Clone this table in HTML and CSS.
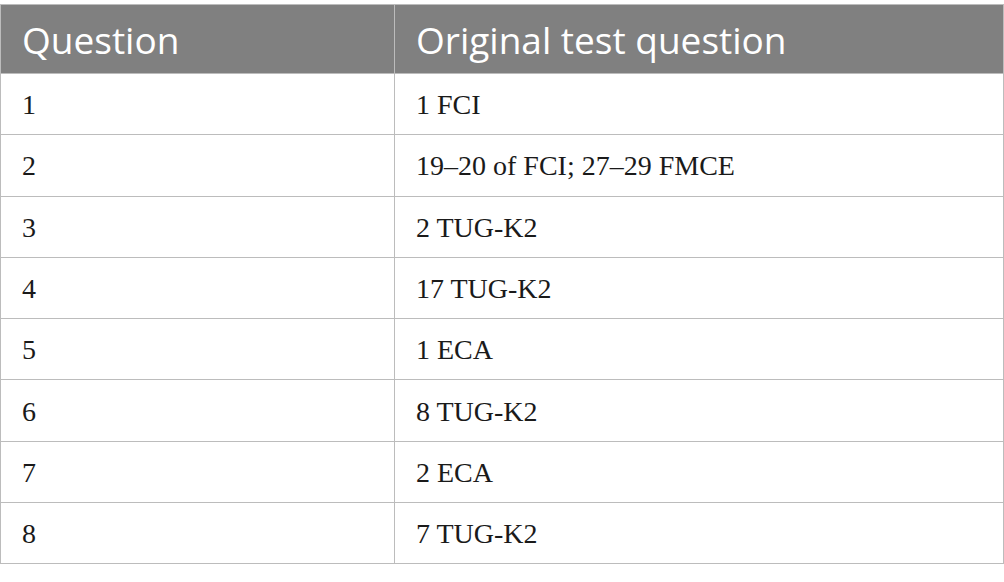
FILE: index.html
```html
<!DOCTYPE html>
<html>
<head>
<meta charset="utf-8">
<link rel="stylesheet" href="styles.css">
</head>
<body>
<table class="qtable">
  <thead>
    <tr class="head-row">
      <th class="col-q">Question</th>
      <th class="col-o">Original test question</th>
    </tr>
  </thead>
  <tbody>
    <tr><td>1</td><td>1 FCI</td></tr>
    <tr><td>2</td><td>19–20 of FCI; 27–29 FMCE</td></tr>
    <tr><td>3</td><td>2 TUG-K2</td></tr>
    <tr><td>4</td><td>17 TUG-K2</td></tr>
    <tr><td>5</td><td>1 ECA</td></tr>
    <tr><td>6</td><td>8 TUG-K2</td></tr>
    <tr><td>7</td><td>2 ECA</td></tr>
    <tr><td>8</td><td>7 TUG-K2</td></tr>
  </tbody>
</table>
</body>
</html>
```
FILE: styles.css
```css
html, body {
  margin: 0;
  padding: 0;
  background: #ffffff;
}
body {
  padding-top: 4px;
}
.qtable {
  width: 1004px;
  border-collapse: collapse;
  table-layout: fixed;
}
.qtable th,
.qtable td {
  border: 1px solid #bcbcbc;
  padding: 0 0 0 21px;
  text-align: left;
  vertical-align: middle;
}
.col-q {
  width: 372px;
}
.head-row {
  height: 69px;
}
.qtable th {
  background: #808080;
  color: #ffffff;
  font-family: "Open Sans", sans-serif;
  font-weight: 400;
  font-size: 37px;
  padding-top: 1px;
}
.qtable tbody tr {
  height: 61.3px;
}
.qtable td {
  font-family: "Liberation Serif", serif;
  font-size: 28px;
  color: #1a1a1a;
  padding-top: 2px;
}
```
